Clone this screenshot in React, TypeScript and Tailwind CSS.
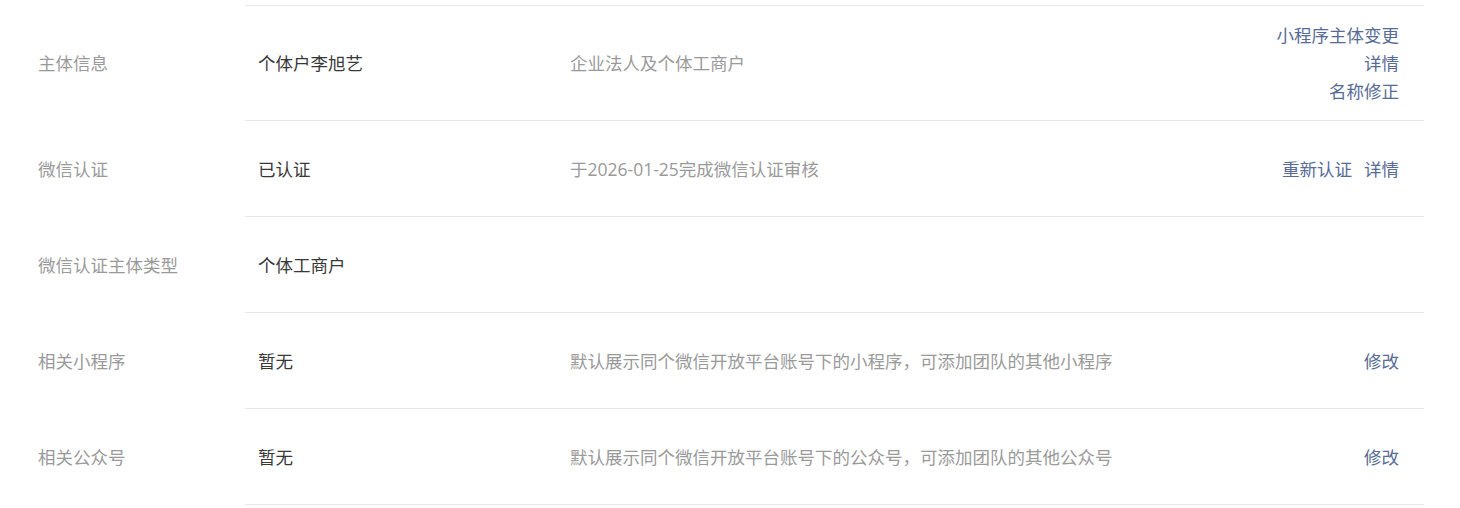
const rows = [
  {
    label: "主体信息",
    value: "个体户李旭艺",
    desc: "企业法人及个体工商户",
    actions: [["小程序主体变更"], ["详情"], ["名称修正"]],
  },
  {
    label: "微信认证",
    value: "已认证",
    desc: "于2026-01-25完成微信认证审核",
    actions: [["重新认证", "详情"]],
  },
  { label: "微信认证主体类型", value: "个体工商户", desc: "", actions: [] },
  {
    label: "相关小程序",
    value: "暂无",
    desc: "默认展示同个微信开放平台账号下的小程序，可添加团队的其他小程序",
    actions: [["修改"]],
  },
  {
    label: "相关公众号",
    value: "暂无",
    desc: "默认展示同个微信开放平台账号下的公众号，可添加团队的其他公众号",
    actions: [["修改"]],
  },
];

export default function App() {
  return (
    <div
      className="w-[1460px] h-[508px] bg-white pt-[5px] text-[17.5px] leading-[28px] overflow-hidden"
      style={{ fontFamily: '"Open Sans", "Noto Sans CJK SC", sans-serif' }}
    >
      {rows.map((row, i) => (
        <div key={row.label} className="flex">
          <div className="w-[245px] pl-[38px] flex items-center text-[#9a9a9a]">
            {row.label}
          </div>
          <div
            className={`w-[1179px] flex items-center border-b border-[#e7e7e7] ${
              i === 0 ? "border-t py-[15px]" : "h-[96px]"
            }`}
          >
            <div className="w-[325px] pl-[13px] text-[#383838]">{row.value}</div>
            <div className="flex-1 text-[#9a9a9a]">{row.desc}</div>
            <div className="pr-[25px] flex flex-col items-end">
              {row.actions.map((line, j) => (
                <div key={j} className="flex gap-[12px]">
                  {line.map((a) => (
                    <a key={a} href="#" className="text-[#576b95]">
                      {a}
                    </a>
                  ))}
                </div>
              ))}
            </div>
          </div>
        </div>
      ))}
    </div>
  );
}
